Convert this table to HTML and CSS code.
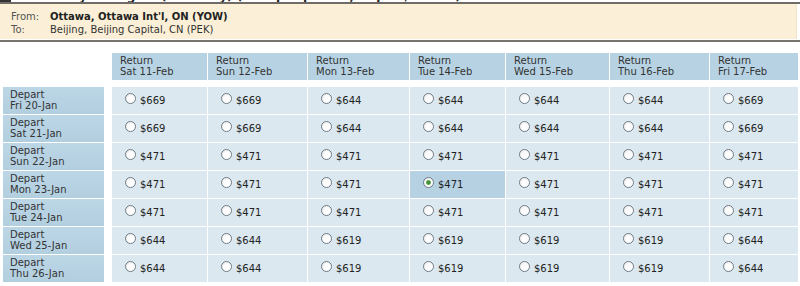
FILE: index.html
```html
<!DOCTYPE html>
<html lang="en">
<head>
<meta charset="utf-8">
<title>Flight matrix</title>
<link rel="stylesheet" href="styles.css">
</head>
<body>
<div class="title"><div class="title-text"><span class="title-icon"></span>Select your flights (Economy) (Fare per person, Depart/Return)</div></div>
<div class="route">
  <div class="route-row"><span class="route-label">From:</span><span class="route-value strong">Ottawa, Ottawa Int'l, ON (YOW)</span></div>
  <div class="route-row"><span class="route-label">To:</span><span class="route-value">Beijing, Beijing Capital, CN (PEK)</span></div>
</div>
<div class="rule"></div>
<div class="matrix">
  <div class="corner"></div>
  <div class="head">Return<br>Sat 11-Feb</div>
  <div class="head">Return<br>Sun 12-Feb</div>
  <div class="head">Return<br>Mon 13-Feb</div>
  <div class="head">Return<br>Tue 14-Feb</div>
  <div class="head">Return<br>Wed 15-Feb</div>
  <div class="head">Return<br>Thu 16-Feb</div>
  <div class="head">Return<br>Fri 17-Feb</div>

  <div class="label">Depart<br>Fri 20-Jan</div>
  <div class="cell"><span class="radio"></span>$669</div>
  <div class="cell"><span class="radio"></span>$669</div>
  <div class="cell"><span class="radio"></span>$644</div>
  <div class="cell"><span class="radio"></span>$644</div>
  <div class="cell"><span class="radio"></span>$644</div>
  <div class="cell"><span class="radio"></span>$644</div>
  <div class="cell"><span class="radio"></span>$669</div>

  <div class="label">Depart<br>Sat 21-Jan</div>
  <div class="cell"><span class="radio"></span>$669</div>
  <div class="cell"><span class="radio"></span>$669</div>
  <div class="cell"><span class="radio"></span>$644</div>
  <div class="cell"><span class="radio"></span>$644</div>
  <div class="cell"><span class="radio"></span>$644</div>
  <div class="cell"><span class="radio"></span>$644</div>
  <div class="cell"><span class="radio"></span>$669</div>

  <div class="label">Depart<br>Sun 22-Jan</div>
  <div class="cell"><span class="radio"></span>$471</div>
  <div class="cell"><span class="radio"></span>$471</div>
  <div class="cell"><span class="radio"></span>$471</div>
  <div class="cell"><span class="radio"></span>$471</div>
  <div class="cell"><span class="radio"></span>$471</div>
  <div class="cell"><span class="radio"></span>$471</div>
  <div class="cell"><span class="radio"></span>$471</div>

  <div class="label">Depart<br>Mon 23-Jan</div>
  <div class="cell"><span class="radio"></span>$471</div>
  <div class="cell"><span class="radio"></span>$471</div>
  <div class="cell"><span class="radio"></span>$471</div>
  <div class="cell sel"><span class="radio on"></span>$471</div>
  <div class="cell"><span class="radio"></span>$471</div>
  <div class="cell"><span class="radio"></span>$471</div>
  <div class="cell"><span class="radio"></span>$471</div>

  <div class="label">Depart<br>Tue 24-Jan</div>
  <div class="cell"><span class="radio"></span>$471</div>
  <div class="cell"><span class="radio"></span>$471</div>
  <div class="cell"><span class="radio"></span>$471</div>
  <div class="cell"><span class="radio"></span>$471</div>
  <div class="cell"><span class="radio"></span>$471</div>
  <div class="cell"><span class="radio"></span>$471</div>
  <div class="cell"><span class="radio"></span>$471</div>

  <div class="label">Depart<br>Wed 25-Jan</div>
  <div class="cell"><span class="radio"></span>$644</div>
  <div class="cell"><span class="radio"></span>$644</div>
  <div class="cell"><span class="radio"></span>$619</div>
  <div class="cell"><span class="radio"></span>$619</div>
  <div class="cell"><span class="radio"></span>$619</div>
  <div class="cell"><span class="radio"></span>$619</div>
  <div class="cell"><span class="radio"></span>$644</div>

  <div class="label">Depart<br>Thu 26-Jan</div>
  <div class="cell"><span class="radio"></span>$644</div>
  <div class="cell"><span class="radio"></span>$644</div>
  <div class="cell"><span class="radio"></span>$619</div>
  <div class="cell"><span class="radio"></span>$619</div>
  <div class="cell"><span class="radio"></span>$619</div>
  <div class="cell"><span class="radio"></span>$619</div>
  <div class="cell"><span class="radio"></span>$644</div>
</div>
</body>
</html>
```

FILE: styles.css
```css
html, body {
  margin: 0;
  padding: 0;
  background: #ffffff;
}
body {
  font-family: "DejaVu Sans", Verdana, sans-serif;
  font-size: 10px;
  color: #333333;
  width: 800px;
  height: 286px;
  overflow: hidden;
}

.title {
  height: 2px;
  overflow: hidden;
  border-bottom: 2px solid #6f6c68;
}
.title-text {
  margin-top: -11px;
  font-size: 12px;
  line-height: 14px;
  font-weight: bold;
  color: #222222;
  white-space: nowrap;
  display: flex;
  align-items: flex-end;
}
.title-icon {
  display: inline-block;
  width: 11px;
  height: 14px;
  background: #333333;
  margin-right: 22px;
}

.route {
  background: #fbf0d7;
  margin-right: 3px;
  padding: 6px 0 3px 0;
  height: 26px;
  border-right: 1px solid #efe4cc;
}
.route-row {
  display: flex;
  line-height: 13px;
}
.route-label {
  width: 39px;
  padding-left: 11px;
  color: #555555;
}
.route-value {
  color: #333333;
}
.route-value.strong {
  font-weight: bold;
  color: #222222;
}

.rule {
  margin-top: 1px;
  height: 2px;
  background: #77736e;
}

.matrix {
  margin: 11px 0 0 3px;
  display: grid;
  grid-template-columns: 108px 95px 99px 101px 95px 103px 99px 88px;
  column-gap: 1px;
  row-gap: 1px;
}

.corner {
  height: 27px;
  margin-bottom: 6px;
}
.head {
  height: 27px;
  margin-bottom: 6px;
  box-sizing: border-box;
  padding: 2px 0 0 8px;
  line-height: 11px;
  background: #b7d3e3;
  color: #333333;
}
.label {
  width: 101px;
  height: 27px;
  box-sizing: border-box;
  padding: 2px 0 0 7px;
  line-height: 11px;
  background: linear-gradient(#bcd6e5, #b2cfe0);
  color: #333333;
}
.cell {
  height: 27px;
  box-sizing: border-box;
  padding-left: 12px;
  display: flex;
  align-items: center;
  background: #dbe8ef;
  color: #222222;
}
.cell.sel {
  background: #b5d1e2;
}
.radio {
  width: 11px;
  height: 11px;
  box-sizing: border-box;
  border: 1px solid #6f7c88;
  border-radius: 50%;
  background: radial-gradient(circle at 60% 65%, #ffffff 40%, #e4e4e4 100%);
  margin: 0 4px 5px 1px;
  display: flex;
  align-items: center;
  justify-content: center;
}
.radio.on::after {
  content: "";
  width: 5px;
  height: 5px;
  border-radius: 50%;
  background: radial-gradient(circle, #3f8f34 30%, #8cc37e 100%);
}
```
